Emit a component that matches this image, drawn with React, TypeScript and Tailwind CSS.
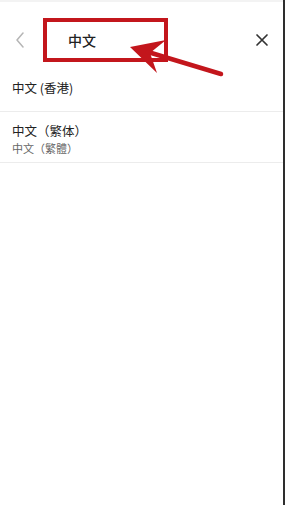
export default function App() {
  return (
    <div
      className="relative flex h-[505px] w-[285px] overflow-hidden bg-white"
      style={{ fontFamily: '"Noto Sans CJK SC", "Noto Sans", sans-serif' }}
    >
      <div className="flex flex-1 flex-col">
        <div className="h-[2px] bg-[#f3f3f3]" />

        {/* search header */}
        <div className="flex h-[64px] items-center pl-[15px] pr-[14px] pt-[12px]">
          <svg width="10" height="16" viewBox="0 0 10 16" className="shrink-0">
            <path d="M8 1 L2 8 L8 15" fill="none" stroke="#b5b5b5" strokeWidth="1.5" strokeLinecap="round" strokeLinejoin="round" />
          </svg>
          <div className="ml-[43px] flex-1 text-[14px] font-medium text-[#222]">中文</div>
          <svg width="14" height="14" viewBox="0 0 14 14" className="shrink-0">
            <path d="M2 2 L12 12 M12 2 L2 12" stroke="#333" strokeWidth="1.7" strokeLinecap="round" />
          </svg>
        </div>

        <div className="flex h-[46px] items-center border-b border-[#ececec] px-[12px] pb-[2px]">
          <span className="text-[12.5px] leading-[17px] text-[#222]">中文 (香港)</span>
        </div>

        <div className="flex flex-col border-b border-[#ececec] px-[12px] pt-[10px] pb-[6px]">
          <span className="text-[12.5px] leading-[17px] text-[#222]">中文（繁体）</span>
          <span className="mt-[2px] text-[11px] leading-[15px] text-[#666]">中文（繁體）</span>
        </div>
      </div>
      <div className="w-[2px] bg-[#2e2e2e]" />

      {/* annotation: red box + arrow */}
      <div className="absolute left-[43px] top-[18px] h-[44px] w-[125px] border-[4px] border-[#c3161c]" />
      <svg className="pointer-events-none absolute left-0 top-0" width="285" height="505">
        <polygon points="130,47 166,40 150,53 157,73" fill="#c3161c" />
        <line x1="148" y1="52" x2="221" y2="74" stroke="#c3161c" strokeWidth="4.5" strokeLinecap="round" />
      </svg>
    </div>
  )
}
